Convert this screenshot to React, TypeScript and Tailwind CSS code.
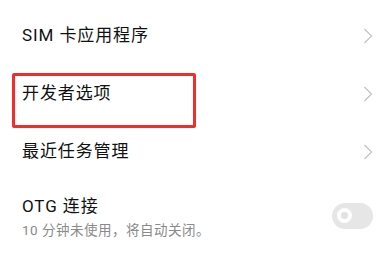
import React from 'react';

const font = { fontFamily: 'Roboto, "Noto Sans CJK SC", "Noto Sans", sans-serif' };

function Chevron() {
  return (
    <svg width="10" height="16" viewBox="0 0 10 16" className="shrink-0">
      <path d="M1.5 1 L8.5 8 L1.5 15" fill="none" stroke="#c2c2c2" strokeWidth="1.2" />
    </svg>
  );
}

function Row({ title }: { title: string }) {
  return (
    <div className="flex items-center justify-between h-[58px] pl-[22px] pr-[10px]">
      <span className="text-[17px] text-[#111] tracking-[0.9px]">{title}</span>
      <Chevron />
    </div>
  );
}

export default function App() {
  return (
    <div className="relative w-[383px] h-[256px] bg-white overflow-hidden" style={font}>
      <div className="pt-[7px]">
        <Row title="SIM 卡应用程序" />
        <Row title="开发者选项" />
        <Row title="最近任务管理" />
        <div className="flex items-center justify-between pl-[22px] pr-[10px] pt-[13px]">
          <div className="flex flex-col">
            <span className="text-[17px] text-[#111] tracking-[0.9px] leading-[24px]">OTG 连接</span>
            <span className="text-[13.5px] text-[#8a8a8a] tracking-[0.5px] leading-[22px] mt-[1px]">10 分钟未使用，将自动关闭。</span>
          </div>
          <div className="w-[41px] h-[26px] rounded-full bg-[#e6e6e6] flex items-center pl-[5px] -mt-[4px]">
            <div className="w-[15px] h-[15px] rounded-full bg-white flex items-center justify-center">
              <div className="w-[7px] h-[7px] rounded-full bg-[#e2e2e2]" />
            </div>
          </div>
        </div>
      </div>
      <div className="absolute left-[12px] top-[73px] w-[184px] h-[55px] border-[3px] border-[#f52a2a] rounded-[2px]" />
    </div>
  );
}
